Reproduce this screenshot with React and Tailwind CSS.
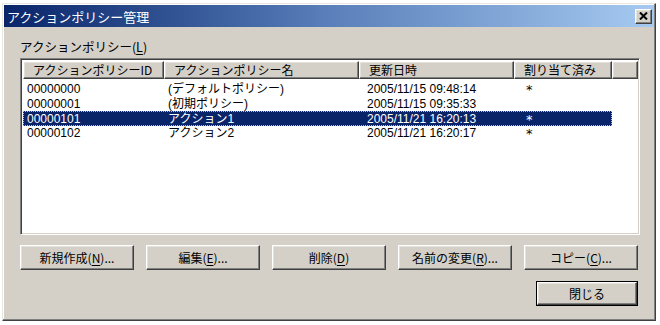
import React from "react";

const font = { fontFamily: '"Noto Sans CJK JP", "Noto Sans", sans-serif' };
const rowFont = { fontFamily: '"Liberation Sans", "Noto Sans CJK JP", sans-serif' };

const rows = [
  { id: "00000000", name: "(デフォルトポリシー)", date: "2005/11/15 09:48:14", used: "*" },
  { id: "00000001", name: "(初期ポリシー)", date: "2005/11/15 09:35:33", used: "" },
  { id: "00000101", name: "アクション1", date: "2005/11/21 16:20:13", used: "*", selected: true },
  { id: "00000102", name: "アクション2", date: "2005/11/21 16:20:17", used: "*" },
];

const cols = [
  { label: "アクションポリシーID", w: "w-[141px]" },
  { label: "アクションポリシー名", w: "w-[195px]" },
  { label: "更新日時", w: "w-[155px]" },
  { label: "割り当て済み", w: "w-[98px]" },
];

const raised =
  "border border-t-white border-l-white border-b-[#404040] border-r-[#404040] shadow-[inset_-1px_-1px_#808080,inset_1px_1px_#e4e1da] bg-[#d4d0c8]";

const Mn = ({ children }) => <span className="underline underline-offset-2">{children}</span>;

const Btn = ({ children, isDefault }) => (
  <button
    type="button"
    className={`h-[25px] text-[12px] text-black leading-none ${
      isDefault ? "border border-black w-[102px]" : "w-[114px]"
    }`}
  >
    <div className={`h-full w-full flex items-center justify-center ${raised}`}>{children}</div>
  </button>
);

export default function App() {
  return (
    <div className="w-[660px] h-[325px] bg-white pl-[2px] pt-[3px]" style={font}>
      <div className="w-[654px] h-[318px] bg-[#d4d0c8] border border-t-[#e8e6e0] border-l-[#e8e6e0] border-b-[#404040] border-r-[#404040] shadow-[inset_-1px_-1px_#808080,inset_1px_1px_#ffffff] p-[1px] flex flex-col">
        {/* title bar */}
        <div className="h-[22px] flex items-center justify-between bg-gradient-to-r from-[#0a246a] via-[#5a7fba] to-[#a6caf0] pl-[3px] pr-[2px]">
          <span className="text-white text-[13px] leading-none">アクションポリシー管理</span>
          <div className={`w-[17px] h-[15px] flex items-center justify-center ${raised}`}>
            <svg width="9" height="8" viewBox="0 0 9 8">
              <path d="M1 0.5 L8 7.5 M8 0.5 L1 7.5" stroke="#000" strokeWidth="2" />
            </svg>
          </div>
        </div>

        <div className="pl-[16px] pr-[15px] flex flex-col">
          <div className="mt-[12px] h-[16px] text-[12.5px] leading-[16px] text-black">
            アクションポリシー(<Mn>L</Mn>)
          </div>

          {/* list view */}
          <div className="mt-[3px] w-[620px] h-[177px] bg-white border border-t-[#808080] border-l-[#808080] border-b-white border-r-white shadow-[inset_1px_1px_#404040,inset_-1px_-1px_#d4d0c8] p-[2px] pr-[1px] flex flex-col">
            <div className="h-[18px] flex text-[12px] leading-none text-black">
              {cols.map((c) => (
                <div key={c.label} className={`${c.w} h-full pl-[9px] flex items-center ${raised}`}>
                  {c.label}
                </div>
              ))}
              <div className={`flex-1 h-full ${raised}`} />
            </div>
            <div className="pt-[3px] flex flex-col" style={rowFont}>
              {rows.map((r) => (
                <div
                  key={r.id}
                  className={`h-[14.67px] w-[589px] flex items-center text-[12px] leading-[12px] ${
                    r.selected
                      ? "bg-[#0a246a] text-white outline-1 outline-dotted outline-[#c9c28a] -outline-offset-1"
                      : "text-black"
                  }`}
                >
                  <div className="w-[141px] pl-[4px]">{r.id}</div>
                  <div className="w-[195px] pl-[4px]">{r.name}</div>
                  <div className="w-[155px] pl-[8px]">{r.date}</div>
                  <div
                    className="w-[98px] pl-[12px] text-[13px] leading-[12px] pt-[2px]"
                    style={{ fontFamily: '"DejaVu Sans", sans-serif' }}
                  >
                    {r.used}
                  </div>
                </div>
              ))}
            </div>
          </div>

          {/* buttons */}
          <div className="mt-[10px] flex gap-[12px]">
            <Btn>
              新規作成(<Mn>N</Mn>)...
            </Btn>
            <Btn>
              編集(<Mn>E</Mn>)...
            </Btn>
            <Btn>
              削除(<Mn>D</Mn>)
            </Btn>
            <Btn>
              名前の変更(<Mn>R</Mn>)...
            </Btn>
            <Btn>
              コピー(<Mn>C</Mn>)...
            </Btn>
          </div>
          <div className="mt-[11px] flex justify-end pr-[1px]">
            <Btn isDefault>閉じる</Btn>
          </div>
        </div>
      </div>
    </div>
  );
}
